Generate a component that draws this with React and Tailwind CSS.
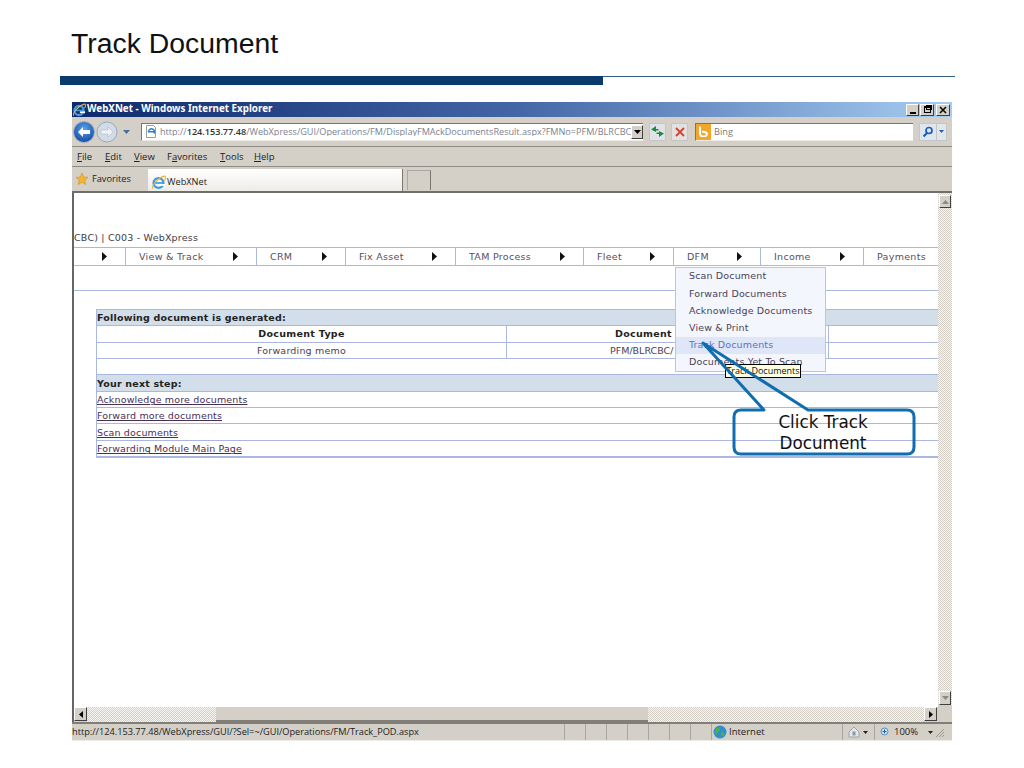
import React from "react";

const IE = ({ s = 14 }) => (
  <svg width={s} height={s} viewBox="0 0 16 16" className="shrink-0">
    <circle cx="8" cy="8.5" r="5.2" fill="none" stroke="#3f9be0" strokeWidth="2.6" />
    <rect x="3" y="7.6" width="10" height="1.8" fill="#3f9be0" />
    <rect x="9" y="9.6" width="6" height="2" fill="#fff" />
    <path d="M2 14.5C0 12 7 3 14.5 1.2c1.5.6 1 3-.2 4.8" fill="none" stroke="#e8b33a" strokeWidth="1.2" />
  </svg>
);

const Tri = () => (
  <svg width="5" height="9" viewBox="0 0 5 9" className="block"><path d="M0 0l5 4.5L0 9z" fill="#111" /></svg>
);

const Raised = ({ className = "", children }) => (
  <div className={"flex items-center justify-center bg-[#d4d0c8] border border-t-white border-l-white border-r-[#404040] border-b-[#404040] " + className}>{children}</div>
);

const Mnem = ({ a, b, c }) => (
  <span>{a}<span className="underline">{b}</span>{c}</span>
);

const navItems = [
  { w: "w-[52px]", label: "", tri: true },
  { w: "w-[131px]", label: "View & Track", tri: true },
  { w: "w-[89px]", label: "CRM", tri: true },
  { w: "w-[110px]", label: "Fix Asset", tri: true },
  { w: "w-[128px]", label: "TAM Process", tri: true },
  { w: "w-[90px]", label: "Fleet", tri: true },
  { w: "w-[87px]", label: "DFM", tri: true },
  { w: "w-[103px]", label: "Income", tri: true },
  { w: "w-[75px]", label: "Payments" },
];

const dither = "bg-[repeating-conic-gradient(#d4d0c8_0_25%,#f6f5f2_0_50%)] bg-[length:2px_2px]";

export default function App() {
  return (
    <div className="relative w-[1024px] h-[768px] bg-white overflow-hidden font-['DejaVu_Sans',sans-serif]">
      <h1 className="pl-[71px] pt-[27px] h-[76px] text-[28.4px] leading-[33px] text-[#111] font-['Liberation_Sans',sans-serif]">Track Document</h1>
      <div className="ml-[60px] w-[895px] flex items-start">
        <div className="w-[543px] h-[9px] bg-[#0b3a6c]"></div>
        <div className="flex-1 h-px bg-[#34607f]"></div>
      </div>

      <div className="ml-[72px] mt-[17px] w-[880px] flex flex-col">
        {/* title bar */}
        <div className="h-[15px] flex items-center bg-gradient-to-r from-[#0f2a6c] via-[#4465a5] to-[#a8cdf2] pr-[2px]">
          <IE s={14} />
          <span className="ml-[1px] text-[9.8px] font-bold text-white font-['Noto_Sans',sans-serif]">WebXNet - Windows Internet Explorer</span>
          <div className="ml-auto flex">
            <Raised className="w-[13px] h-[12px]"><div className="w-[6px] h-[2px] bg-black mt-[6px]"></div></Raised>
            <Raised className="w-[14px] h-[12px] ml-[1px]"><div className="relative w-[7px] h-[7px] border border-black border-t-2"><div className="absolute -top-[3px] left-[1px] w-[6px] h-[5px] border border-black border-t-2"></div></div></Raised>
            <Raised className="w-[14px] h-[12px] ml-[2px]">
              <svg width="8" height="8" viewBox="0 0 8 8"><path d="M1 1l6 6M7 1L1 7" stroke="#000" strokeWidth="1.5" /></svg>
            </Raised>
          </div>
        </div>

        {/* address toolbar */}
        <div className="h-[30px] flex items-center bg-[#d4d0c8] border-b border-[#8e8c84]">
          <svg width="72" height="26" viewBox="0 0 72 26" className="ml-[1px] shrink-0">
            <defs>
              <radialGradient id="bk" cx="50%" cy="35%" r="70%"><stop offset="0%" stopColor="#5aa2e8" /><stop offset="100%" stopColor="#10459c" /></radialGradient>
            </defs>
            <circle cx="11" cy="13" r="10.5" fill="url(#bk)" stroke="#a9b5c8" />
            <path d="M5 13l5-5v3h7v4h-7v3z" fill="#fff" />
            <circle cx="34" cy="13" r="10" fill="#d3dbe6" stroke="#9aa8bc" />
            <path d="M40 13l-5-5v3h-7v4h7v3z" fill="#eef2f7" stroke="#a8b2c2" strokeWidth=".5" />
            <path d="M50 11h7l-3.5 4z" fill="#3e6fa8" />
          </svg>
          <div className="ml-[-4px] w-[502px] h-[18px] flex items-center bg-white border border-[#77766f] border-b-[#ecebe6] border-r-0">
            <svg width="12" height="13" viewBox="0 0 12 13" className="ml-[3px] shrink-0"><path d="M1.5.5h7l2 2v10h-9z" fill="#fff" stroke="#9a9a9a" /><path d="M3.5 7a3 3 0 1 1 5.5 1.5M3 6.8h6" fill="none" stroke="#2c7fcc" strokeWidth="1.5" /></svg>
            <span className="ml-[3px] text-[9.1px] leading-none whitespace-nowrap overflow-hidden w-[472px] text-[#7a8191] font-['Open_Sans',sans-serif]">http://<span className="text-[#333] font-semibold">124.153.77.48</span>/WebXpress/GUI/Operations/FM/DisplayFMAckDocumentsResult.aspx?FMNo=PFM/BLRCBC/</span>
            <Raised className="ml-auto w-[12px] h-[14px] shrink-0"><svg width="7" height="4" viewBox="0 0 7 4"><path d="M0 0h7L3.5 4z" fill="#000" /></svg></Raised>
          </div>
          <div className="ml-[6px] w-[17px] h-[18px] flex items-center justify-center bg-[#dfe3e8] border border-[#c4c6c6]">
            <svg width="13" height="11" viewBox="0 0 13 11"><path d="M5 0L0 3.5 5 6V4.5h2.5V3H5zM8 11l5-3.5L8 5v1.500H5.500V8H8z" fill="#1c8a3a" /></svg>
          </div>
          <div className="ml-[5px] w-[17px] h-[18px] flex items-center justify-center bg-[#e2e0e0] border border-[#c4c6c6]">
            <svg width="10" height="10" viewBox="0 0 10 10"><path d="M1 1l8 8M9 1L1 9" stroke="#d8402c" strokeWidth="1.8" /></svg>
          </div>
          <div className="ml-[7px] w-[218px] h-[18px] flex items-center bg-white border border-[#77766f] border-b-[#ecebe6] border-r-0">
            <div className="w-[15px] h-[16px] bg-[#f4a62a] flex items-center justify-center shrink-0">
              <svg width="11" height="11" viewBox="0 0 11 11"><path d="M2 .5v7.500a3.500 2.500 0 0 0 7 0 3.500 2.500 0 0 0-5-2" fill="none" stroke="#fff" strokeWidth="2" /></svg>
            </div>
            <span className="ml-[3px] text-[9.2px] text-[#7b7b7b] font-['Open_Sans',sans-serif]">Bing</span>
          </div>
          <div className="ml-[6px] w-[18px] h-[18px] flex items-center justify-center bg-[#e0e6ee] border border-[#c4c6c6]">
            <svg width="12" height="12" viewBox="0 0 12 12"><circle cx="7" cy="4.5" r="3" fill="none" stroke="#1b5fb8" strokeWidth="1.7" /><path d="M5 7L1.500 10.500" stroke="#1b5fb8" strokeWidth="2.2" /></svg>
          </div>
          <div className="w-[10px] h-[18px] flex items-center justify-center bg-[#e0e6ee] border border-[#c4c6c6] border-l-0">
            <svg width="5" height="3" viewBox="0 0 5 3"><path d="M0 0h5L2.5 3z" fill="#2a5fa8" /></svg>
          </div>
        </div>

        {/* menu bar */}
        <div className="h-[20px] flex items-center bg-[#d4d0c8] border-b border-[#8e8c84] text-[9.5px] text-[#222] font-['Open_Sans',sans-serif] pl-[5px] pt-[2px]">
          <span className="w-[28px]"><Mnem b="F" c="ile" /></span>
          <span className="w-[29px]"><Mnem b="E" c="dit" /></span>
          <span className="w-[33px]"><Mnem b="V" c="iew" /></span>
          <span className="w-[53px]"><Mnem a="F" b="a" c="vorites" /></span>
          <span className="w-[34px]"><Mnem b="T" c="ools" /></span>
          <span><Mnem b="H" c="elp" /></span>
        </div>

        {/* favorites bar */}
        <div className="h-[26px] flex items-end bg-[#d4d0c8] border-b-2 border-[#6f6e69]">
          <div className="w-[76px] h-full flex items-center pl-[3px] text-[9.2px] text-[#222] font-['Open_Sans',sans-serif]">
            <svg width="14" height="14" viewBox="0 0 14 14" className="shrink-0"><path d="M7 1l1.800 4 4.200.4-3.200 2.800 1 4.300L7 10.200 3.200 12.500l1-4.300L1 5.400 5.200 5z" fill="#f2b431" stroke="#d88e1e" strokeWidth=".6" /></svg>
            <span className="ml-[3px]">Favorites</span>
          </div>
          <div className="w-[255px] h-[22px] flex items-center pl-[3px] pt-[4px] bg-gradient-to-b from-white to-[#eeece6] border-r border-[#77766f] text-[9.2px] text-[#222] font-['Open_Sans',sans-serif]">
            <IE s={15} />
            <span className="ml-[1px]">WebXNet</span>
          </div>
          <div className="ml-[4px] w-[24px] h-[20px] mb-[1px] border border-[#aaa8a0] border-b-0 border-r-[#77766f]"></div>
        </div>

        {/* content */}
        <div className="flex h-[514px]">
          <div className="w-[866px] border-l-2 border-[#666] bg-white flex flex-col overflow-hidden text-[9.5px] text-[#4a3f52]">
            <div className="h-[54px] flex items-end pb-[5px] leading-none whitespace-nowrap tracking-[.2px] text-[#3c3c4a]">CBC) | C003 - WebXpress</div>
            <div className="h-[19px] flex border-y border-[#a9b8dc] whitespace-nowrap">
              {navItems.map((n, i) => (
                <div key={i} className={n.w + " relative shrink-0 flex items-center pl-[13px] pt-[2px] tracking-[.3px] border-r border-[#a9b8dc] last:border-r-0"}>
                  <span className="text-[#555064]">{n.label}</span>
                  {n.tri && <span className="absolute top-[4px] right-[18px]"><Tri /></span>}
                </div>
              ))}
            </div>
            <div className="h-[24px] border-b border-[#a9b8dc] box-content"></div>
            <div className="ml-[22px] mt-[18px] border border-[#a9b8dc] border-r-0">
              <div className="h-[13px] pt-[2px] bg-[#d2deea] flex items-center font-bold text-[#222] border-b border-[#a9b8dc] box-content tracking-[.2px]">Following document is generated:</div>
              <div className="flex h-[14px] pt-[2px] box-content border-b border-[#a9b8dc] font-bold text-[#222]">
                <div className="w-[410px] flex items-center justify-center border-r border-[#a9b8dc] -mt-[2px] tracking-[.3px]">Document Type</div>
                <div className="w-[322px] flex items-center pl-[108px] border-r border-[#a9b8dc] -mt-[2px] whitespace-nowrap tracking-[.3px]">Document No</div>
              </div>
              <div className="flex h-[15px] box-content border-b border-[#a9b8dc]">
                <div className="w-[410px] flex items-center justify-center pt-[2px] border-r border-[#a9b8dc] tracking-[.2px]">Forwarding memo</div>
                <div className="w-[322px] flex items-center pl-[103px] pt-[2px] border-r border-[#a9b8dc] whitespace-nowrap">PFM/BLRCBC/</div>
              </div>
              <div className="h-[15px] box-content border-b border-[#a9b8dc]"></div>
              <div className="h-[14px] pt-[2px] bg-[#d2deea] flex items-center font-bold text-[#222] border-b border-[#a9b8dc] box-content tracking-[.2px]">Your next step:</div>
              <div className="h-[13px] pt-[2px] box-content flex items-center border-b border-[#a9b8dc] underline text-[#4a2f55] tracking-[.15px]">Acknowledge more documents</div>
              <div className="h-[13px] pt-[2px] box-content flex items-center border-b border-[#a9b8dc] underline text-[#4a2f55] tracking-[.15px]">Forward more documents</div>
              <div className="h-[14px] pt-[2px] box-content flex items-center border-b border-[#a9b8dc] underline text-[#4a2f55] tracking-[.15px]">Scan documents</div>
              <div className="h-[13px] pt-[2px] box-content flex items-center border-b border-[#a9b8dc] underline text-[#4a2f55] tracking-[.1px]">Forwarding Module Main Page</div>
            </div>
          </div>
          <div className="w-[14px] flex flex-col">
            <div className={"flex-1 flex flex-col justify-between " + dither}>
              <Raised className="h-[13px] mt-[2px] w-[12px] ml-[1px]"><svg width="7" height="4" viewBox="0 0 7 4"><path d="M0 4h7L3.5 0z" fill="#8a8a8a" /></svg></Raised>
              <Raised className="h-[14px] w-[12px] ml-[1px]"><svg width="7" height="4" viewBox="0 0 7 4"><path d="M0 0h7L3.5 4z" fill="#8a8a8a" /></svg></Raised>
            </div>
            <div className="h-[2px] bg-[#d4d0c8]"></div>
          </div>
        </div>

        {/* horizontal scrollbar */}
        <div className="h-[15px] flex border-l-2 border-[#666] bg-[#d4d0c8]">
          <Raised className="w-[13px] h-[14px] shrink-0"><svg width="4" height="7" viewBox="0 0 4 7"><path d="M4 0v7L0 3.5z" fill="#000" /></svg></Raised>
          <div className={"w-[129px] " + dither}></div>
          <div className="w-[432px] bg-[#d4d0c8] border-b-2 border-[#807e77]"></div>
          <div className={"w-[276px] " + dither}></div>
          <Raised className="w-[13px] h-[14px] shrink-0"><svg width="4" height="7" viewBox="0 0 4 7"><path d="M0 0v7l4-3.5z" fill="#000" /></svg></Raised>
          <div className="flex-1 bg-[#d4d0c8]"></div>
        </div>

        {/* status bar */}
        <div className="h-[19px] flex items-center bg-[#d4d0c8] border-t-2 border-[#807e77] border-b border-b-[#eeece6] text-[9.2px] text-[#222] font-['Open_Sans',sans-serif] whitespace-nowrap">
          <span className="w-[492px] overflow-hidden">http://124.153.77.48/WebXpress/GUI/?Sel=~/GUI/Operations/FM/Track_POD.aspx</span>
          {[0, 1, 2, 3, 4, 5, 6].map((i) => (
            <div key={i} className="w-[21px] h-full border-l border-[#a8a69e]"></div>
          ))}
          <div className="w-[131px] h-full flex items-center pl-[1px] border-l border-[#a8a69e]">
            <svg width="14" height="14" viewBox="0 0 14 14" className="shrink-0"><circle cx="7" cy="7" r="6.5" fill="#2f8ed0" /><path d="M3 3c2-1 4 0 4 2s-3 2-3 4-2 0-2-2 0-3 1-4zM9 7c2 0 3 1 2 3s-3 2-3 1 0-4 1-4z" fill="#4cae4c" /></svg>
            <span className="ml-[2px] text-[9.5px]">Internet</span>
          </div>
          <div className="w-[32px] h-full flex items-center pl-[5px] border-l border-[#a8a69e]">
            <svg width="12" height="12" viewBox="0 0 12 12"><path d="M1 6l5-5 5 5v5H1z" fill="#e4e6e8" stroke="#9aa6b2" /><rect x="4.5" y="5.5" width="3" height="4" fill="#8a9aa8" /></svg>
            <svg width="5" height="3" viewBox="0 0 5 3" className="ml-[3px]"><path d="M0 0h5L2.5 3z" fill="#222" /></svg>
          </div>
          <div className="w-[61px] h-full flex items-center pl-[5px] border-l border-[#a8a69e]">
            <svg width="11" height="11" viewBox="0 0 11 11"><circle cx="4.5" cy="4.5" r="3.5" fill="#cfe4f6" stroke="#5b8fc4" /><path d="M4.500 2.500v4M2.500 4.500h4" stroke="#1c62b0" /></svg>
            <span className="ml-[3px] text-[9.5px]">100%</span>
            <svg width="5" height="3" viewBox="0 0 5 3" className="ml-[10px]"><path d="M0 0h5L2.500 3z" fill="#222" /></svg>
          </div>
          <svg width="10" height="12" viewBox="0 0 10 12"><path d="M1 11L9 3M4 11l5-5M7 11l2-2" stroke="#9a988f" /></svg>
        </div>
      </div>

      {/* dropdown menu */}
      <div className="absolute left-[675px] top-[267px] w-[151px] h-[105px] bg-[#f4f6fe] border border-[#b9c5e4] text-[9.5px] tracking-[.15px] text-[#4a4258] whitespace-nowrap">
        {["Scan Document", "Forward Documents", "Acknowledge Documents", "View & Print", "Track Documents", "Documents Yet To Scan"].map((t) => (
          <div key={t} className={"h-[17.2px] flex items-center pl-[13px] " + (t === "Track Documents" ? "bg-[#dfe6f8] text-[#5a74c4]" : "")}>{t}</div>
        ))}
      </div>

      {/* tooltip */}
      <div className="absolute left-[725px] top-[364px] w-[76px] h-[14px] flex items-center justify-center bg-[#ffffe1] border border-black text-[9px] text-[#111] whitespace-nowrap font-['Open_Sans',sans-serif]">Track Documents</div>

      {/* callout */}
      <svg className="absolute left-[695px] top-[335px]" width="230" height="125" viewBox="0 0 230 125">
        <path d="M8 8L69 75H46Q39 75 39 82V112Q39 119 46 119H212Q219 119 219 112V82Q219 75 212 75H113L8 8Z" fill="none" stroke="#0f6db0" strokeWidth="3" strokeLinejoin="round" />
      </svg>
      <div className="absolute left-[734px] top-[412px] w-[178px] h-[42px] flex flex-col items-center justify-center text-[16.8px] leading-[21px] text-[#111]">
        <span>Click Track</span>
        <span>Document</span>
      </div>
    </div>
  );
}
